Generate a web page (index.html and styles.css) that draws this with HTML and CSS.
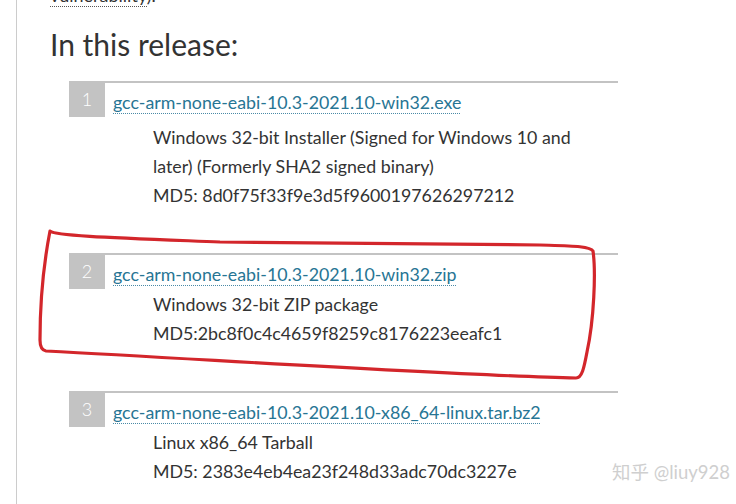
FILE: index.html
```html
<!DOCTYPE html>
<html>
<head>
<meta charset="utf-8">
<link rel="stylesheet" href="styles.css">
</head>
<body>
<div class="page">
  <p class="intro"><a class="link-plain" href="#">vulnerability</a>).</p>
  <h2 class="heading">In this release:</h2>
  <ol class="releases">
    <li class="item">
      <div class="item-head"><span class="num">1</span><a class="file" href="#">gcc-arm-none-eabi-10.3-2021.10-win32.exe</a></div>
      <div class="desc desc-first">Windows 32-bit Installer (Signed for Windows 10 and<br>later) (Formerly SHA2 signed binary)<br>MD5: 8d0f75f33f9e3d5f9600197626297212</div>
    </li>
    <li class="item">
      <div class="item-head"><span class="num">2</span><a class="file" href="#">gcc-arm-none-eabi-10.3-2021.10-win32.zip</a></div>
      <div class="desc">Windows 32-bit ZIP package<br>MD5:2bc8f0c4c4659f8259c8176223eeafc1</div>
    </li>
    <li class="item">
      <div class="item-head"><span class="num">3</span><a class="file" href="#">gcc-arm-none-eabi-10.3-2021.10-x86_64-linux.tar.bz2</a></div>
      <div class="desc">Linux x86_64 Tarball<br>MD5: 2383e4eb4ea23f248d33adc70dc3227e</div>
    </li>
  </ol>
</div>
<svg class="mark" width="736" height="504" viewBox="0 0 736 504">
  <path d="M50,231 C54,236 120,238 220,242 L540,245 C572,246 590,246 593,251 C596,272 594,320 587,352 C584,368 582,378 576,378 C470,376 250,362 46,351 C41,350 40,346 40,340 C40,300 44,262 50,231 Z" fill="none" stroke="#d3262b" stroke-width="3.2" stroke-linejoin="round"/>
</svg>
<div class="watermark">知乎 @liuy928</div>
</body>
</html>
```
FILE: styles.css
```css
html, body {
  margin: 0;
  padding: 0;
  background: #ffffff;
  overflow: hidden;
}
body {
  width: 736px;
  height: 504px;
  position: relative;
  font-family: Lato, "Open Sans", sans-serif;
  color: #333333;
}
.page {
  margin-left: 16px;
  border-left: 1px solid #cccccc;
  height: 504px;
  overflow: hidden;
  padding-left: 33px;
  box-sizing: border-box;
}
.intro {
  margin: -15px 0 0 0;
  font-size: 18px;
  line-height: 20px;
}
.link-plain {
  color: #333333;
  text-decoration: none;
  border-bottom: 1px dotted #555555;
}
.heading {
  margin: 19px 0 0 0;
  font-size: 30px;
  font-weight: 400;
  line-height: 40px;
  color: #333333;
}
.releases {
  list-style: none;
  margin: 17px 0 0 19px;
  padding: 0;
  width: 549px;
}
.item {
  border-top: 2px solid #c3c3c3;
  margin-bottom: 43px;
}
.item-head {
  display: flex;
  align-items: flex-start;
  height: 36px;
}
.num {
  width: 36px;
  height: 36px;
  background: #c3c3c3;
  color: #ffffff;
  font-size: 18px;
  line-height: 36px;
  text-align: center;
  font-weight: 300;
  margin-top: -2px;
}
a.file {
  margin-left: 8px;
  padding-top: 3px;
  line-height: 32px;
  color: #277594;
  text-decoration: none;
  font-size: 17.8px;
  background-image: linear-gradient(to right, #4a8aa6 50%, transparent 50%);
  background-size: 2px 1px;
  background-repeat: repeat-x;
  background-position: 0 30px;
}
.desc {
  margin-left: 84px;
  margin-top: -1px;
  font-size: 17.8px;
  line-height: 29px;
  color: #333333;
}
.desc-first {
  margin-top: 4px;
}
.mark {
  position: absolute;
  left: 0;
  top: 0;
  pointer-events: none;
}
.watermark {
  position: absolute;
  left: 612px;
  top: 458px;
  white-space: nowrap;
  font-family: Lato, "Noto Sans CJK SC", sans-serif;
  font-size: 18.5px;
  color: #cfcfcf;
}
```
